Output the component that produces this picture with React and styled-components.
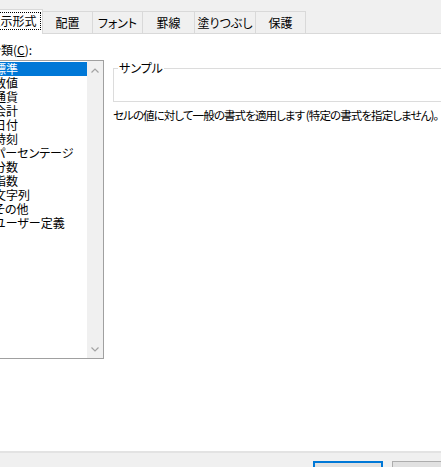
import React from "react";
import styled, { createGlobalStyle } from "styled-components";

const Global = createGlobalStyle`
  html, body { margin: 0; padding: 0; background: #ffffff; overflow: hidden; }
  body { font-family: "Noto Sans CJK JP", "Noto Sans", sans-serif; font-size: 12px; color: #000; }
`;

const Dialog = styled.div`
  width: 441px;
  height: 467px;
  overflow: hidden;
  display: flex;
  flex-direction: column;
  background: #fff;
  font-feature-settings: "palt";
`;

const TabStrip = styled.div`
  height: 34px;
  box-sizing: border-box;
  background: #f0f0f0;
  border-bottom: 1px solid #d9d9d9;
  display: flex;
  align-items: flex-end;
  margin-left: -18px;
  flex-shrink: 0;
`;

const Tab = styled.div`
  box-sizing: border-box;
  height: ${(p) => (p.$active ? 25 : 22)}px;
  margin-bottom: ${(p) => (p.$active ? -1 : 0)}px;
  width: ${(p) => p.$w}px;
  background: ${(p) => (p.$active ? "#ffffff" : "#f0f0f0")};
  border: 1px solid #d9d9d9;
  border-bottom: none;
  border-left: ${(p) => (p.$first ? "1px solid #d9d9d9" : "none")};
  display: flex;
  align-items: center;
  justify-content: center;
  padding-bottom: ${(p) => (p.$active ? 2 : 0)}px;
  line-height: 14px;
  white-space: nowrap;
`;

const Focus = styled.span`
  outline: 1px dotted #000;
  outline-offset: 1px;
  padding: 0 2px;
`;

const Body = styled.div`
  flex: 1;
  display: grid;
  grid-template-columns: 116px 1fr;
  column-gap: 9px;
  margin-left: -12px;
  padding-top: 9px;
  align-items: start;
`;

const LeftCol = styled.div`
  display: flex;
  flex-direction: column;
  gap: 3px;
`;

const Label = styled.div`
  line-height: 14px;
  white-space: nowrap;
  margin-left: 1px;
`;

const ListBox = styled.div`
  box-sizing: border-box;
  height: 299px;
  border: 1px solid #a0a0a0;
  display: flex;
  background: #fff;
`;

const Items = styled.div`
  flex: 1;
  padding-top: 1px;
  display: flex;
  flex-direction: column;
  min-width: 0;
`;

const Item = styled.div`
  height: 14px;
  line-height: 14px;
  padding-left: 5px;
  white-space: nowrap;
  background: ${(p) => (p.$sel ? "#0078d7" : "transparent")};
  color: ${(p) => (p.$sel ? "#fff" : "#000")};
`;

const ScrollBar = styled.div`
  width: 16px;
  background: #f0f0f0;
  display: flex;
  flex-direction: column;
  justify-content: space-between;
  align-items: center;
  padding: 7px 0 6px;
`;

const RightCol = styled.div`
  display: flex;
  flex-direction: column;
  padding-top: 18px;
  gap: 4px;
`;

const Group = styled.fieldset`
  margin: 0;
  width: 400px;
  box-sizing: border-box;
  height: 41px;
  border: 1px solid #dcdcdc;
  padding: 0;
  legend {
    margin-left: 4px;
    padding: 0 1px;
    line-height: 14px;
  }
`;

const Desc = styled.div`
  line-height: 14px;
  white-space: nowrap;
  padding-top: 2px;
  font-size: 11.5px;
  letter-spacing: -0.9px;
`;

const Footer = styled.div`
  height: 16px;
  flex-shrink: 0;
  background: #f0f0f0;
  border-top: 2px solid #e3e3e3;
  box-sizing: border-box;
  display: flex;
  gap: 9px;
  padding: 8px 0 0 313px;
`;

const Button = styled.div`
  box-sizing: border-box;
  flex-shrink: 0;
  width: 70px;
  height: 23px;
  background: #e1e1e1;
  border: ${(p) => (p.$default ? "2px solid #0078d7" : "1px solid #adadad")};
`;

const Chevron = ({ up }) => (
  <svg width="8" height="5" viewBox="0 0 8 5">
    <path
      d={up ? "M0.5 4.5 L4 1 L7.5 4.5" : "M0.5 0.5 L4 4 L7.5 0.5"}
      fill="none"
      stroke="#a3a3a3"
      strokeWidth="1.2"
    />
  </svg>
);

const tabs = [
  { t: "表示形式", w: 61, active: true },
  { t: "配置", w: 50 },
  { t: "フォント", w: 50 },
  { t: "罫線", w: 52 },
  { t: "塗りつぶし", w: 61 },
  { t: "保護", w: 50 },
];

const items = [
  "標準",
  "数値",
  "通貨",
  "会計",
  "日付",
  "時刻",
  "パーセンテージ",
  "分数",
  "指数",
  "文字列",
  "その他",
  "ユーザー定義",
];

export default function App() {
  return (
    <>
      <Global />
      <Dialog>
        <TabStrip>
          {tabs.map((tb, i) => (
            <Tab key={tb.t} $active={tb.active} $w={tb.w} $first={i === 0}>
              {tb.active ? <Focus>{tb.t}</Focus> : tb.t}
            </Tab>
          ))}
        </TabStrip>
        <Body>
          <LeftCol>
            <Label>
              分類(<u>C</u>):
            </Label>
            <ListBox>
              <Items>
                {items.map((it, i) => (
                  <Item key={it} $sel={i === 0}>
                    {it}
                  </Item>
                ))}
              </Items>
              <ScrollBar>
                <Chevron up />
                <Chevron />
              </ScrollBar>
            </ListBox>
          </LeftCol>
          <RightCol>
            <Group>
              <legend>サンプル</legend>
            </Group>
            <Desc>セルの値に対して一般の書式を適用します (特定の書式を指定しません)。</Desc>
          </RightCol>
        </Body>
        <Footer>
          <Button $default />
          <Button />
        </Footer>
      </Dialog>
    </>
  );
}
